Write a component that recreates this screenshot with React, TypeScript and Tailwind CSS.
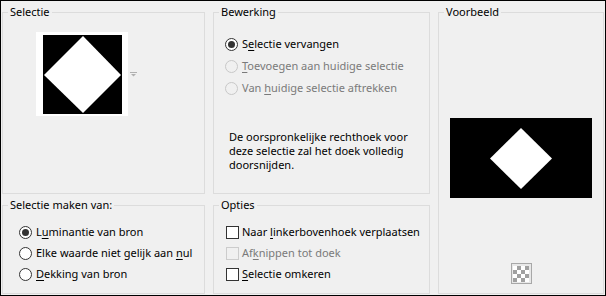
import React from "react";

function U({ children }: { children: React.ReactNode }) {
  return <span className="underline underline-offset-[2px]">{children}</span>;
}

function Radio({ checked, disabled }: { checked?: boolean; disabled?: boolean }) {
  return (
    <span
      className={
        "w-[13px] h-[13px] rounded-full border flex items-center justify-center shrink-0 " +
        (disabled ? "border-[#c8c8c8] bg-[#f0f0f0]" : "border-[#333333] bg-white")
      }
    >
      {checked && <span className="w-[7px] h-[7px] rounded-full bg-[#333333]" />}
    </span>
  );
}

function Check({ disabled }: { disabled?: boolean }) {
  return (
    <span
      className={
        "w-[13px] h-[13px] border shrink-0 " +
        (disabled ? "border-[#cccccc] bg-[#f0f0f0]" : "border-[#333333] bg-white")
      }
    />
  );
}

function Group({
  title,
  className,
  children,
}: {
  title: string;
  className?: string;
  children: React.ReactNode;
}) {
  return (
    <fieldset className={"border border-[#dcdcdc] min-w-0 " + (className ?? "")}>
      <legend className="ml-[5px] px-[2px] leading-[16px] text-black whitespace-nowrap">{title}</legend>
      {children}
    </fieldset>
  );
}

export default function App() {
  return (
    <div className="w-[606px] h-[296px] border border-black bg-[#f0f0f0] px-[1px] pt-[3px] pb-[1px] font-['Noto_Sans',sans-serif] text-[11px] text-black whitespace-nowrap">
      <div className="grid grid-cols-[203px_217px_166px] grid-rows-[190px_97px] gap-x-[8px] gap-y-[3px] h-[290px]">
        <Group title="Selectie">
          <div className="flex items-start mt-[12px] ml-[33px]">
            <div className="w-[92px] h-[84px] bg-white flex items-center justify-center">
              <svg width="79" height="79" viewBox="0 0 79 79">
                <rect width="79" height="79" fill="#000" />
                <polygon points="40,1 78,40 40,78 1,40" fill="#fff" />
              </svg>
            </div>
            <svg width="7" height="5" viewBox="0 0 7 5" className="ml-[2px] mt-[40px]">
              <rect x="0" y="0" width="7" height="1" fill="#b0b0b0" />
              <polygon points="1,2 6,2 3.5,4.5" fill="#b0b0b0" />
            </svg>
          </div>
        </Group>

        <Group title="Bewerking">
          <div className="pt-[13px] pl-[11px] flex flex-col">
            <div className="h-[22px] flex items-center gap-[4px]">
              <Radio checked />
              <span>
                S<U>e</U>lectie vervangen
              </span>
            </div>
            <div className="h-[22px] flex items-center gap-[4px] text-[#7a7a7a]">
              <Radio disabled />
              <span>
                <U>T</U>oevoegen aan huidige selectie
              </span>
            </div>
            <div className="h-[22px] flex items-center gap-[4px] text-[#7a7a7a]">
              <Radio disabled />
              <span>
                Van <U>h</U>uidige selectie aftrekken
              </span>
            </div>
          </div>
          <p className="mt-[31px] ml-[15px] leading-[14px]">
            De oorspronkelijke rechthoek voor
            <br />
            deze selectie zal het doek volledig
            <br />
            doorsnijden.
          </p>
        </Group>

        <Group title="Voorbeeld" className="row-span-2">
          <div className="flex flex-col items-center">
            <div className="mt-[98px] w-[142px] h-[80px] bg-black flex items-center justify-center">
              <svg width="62" height="61" viewBox="0 0 62 61">
                <polygon points="31,0 62,30.5 31,61 0,30.5" fill="#fff" />
              </svg>
            </div>
            <div className="mt-[65px] w-[21px] h-[21px] border border-[#a8a8a8] bg-[#e8e8e8] flex items-center justify-center">
              <svg width="16" height="16" viewBox="0 0 16 16">
                <rect width="16" height="16" fill="#ffffff" />
                <rect x="4" y="0" width="4" height="4" fill="#a0a0a0" />
                <rect x="12" y="0" width="4" height="4" fill="#a0a0a0" />
                <rect x="0" y="4" width="4" height="4" fill="#a0a0a0" />
                <rect x="8" y="4" width="4" height="4" fill="#a0a0a0" />
                <rect x="4" y="8" width="4" height="4" fill="#a0a0a0" />
                <rect x="12" y="8" width="4" height="4" fill="#a0a0a0" />
                <rect x="0" y="12" width="4" height="4" fill="#a0a0a0" />
                <rect x="8" y="12" width="4" height="4" fill="#a0a0a0" />
              </svg>
            </div>
          </div>
        </Group>

        <Group title="Selectie maken van:">
          <div className="pt-[9px] pl-[16px] flex flex-col">
            <div className="h-[21px] flex items-center gap-[4px]">
              <Radio checked />
              <span>
                L<U>u</U>minantie van bron
              </span>
            </div>
            <div className="h-[21px] flex items-center gap-[4px]">
              <Radio />
              <span>
                Elke waarde niet gelijk aan <U>n</U>ul
              </span>
            </div>
            <div className="h-[21px] flex items-center gap-[4px]">
              <Radio />
              <span>
                <U>D</U>ekking van bron
              </span>
            </div>
          </div>
        </Group>

        <Group title="Opties">
          <div className="pt-[9px] pl-[12px] flex flex-col">
            <div className="h-[21px] flex items-center gap-[3px]">
              <Check />
              <span>
                Naar <U>l</U>inkerbovenhoek verplaatsen
              </span>
            </div>
            <div className="h-[21px] flex items-center gap-[3px] text-[#7a7a7a]">
              <Check disabled />
              <span>
                Af<U>k</U>nippen tot doek
              </span>
            </div>
            <div className="h-[21px] flex items-center gap-[3px]">
              <Check />
              <span>
                <U>S</U>electie omkeren
              </span>
            </div>
          </div>
        </Group>
      </div>
    </div>
  );
}
